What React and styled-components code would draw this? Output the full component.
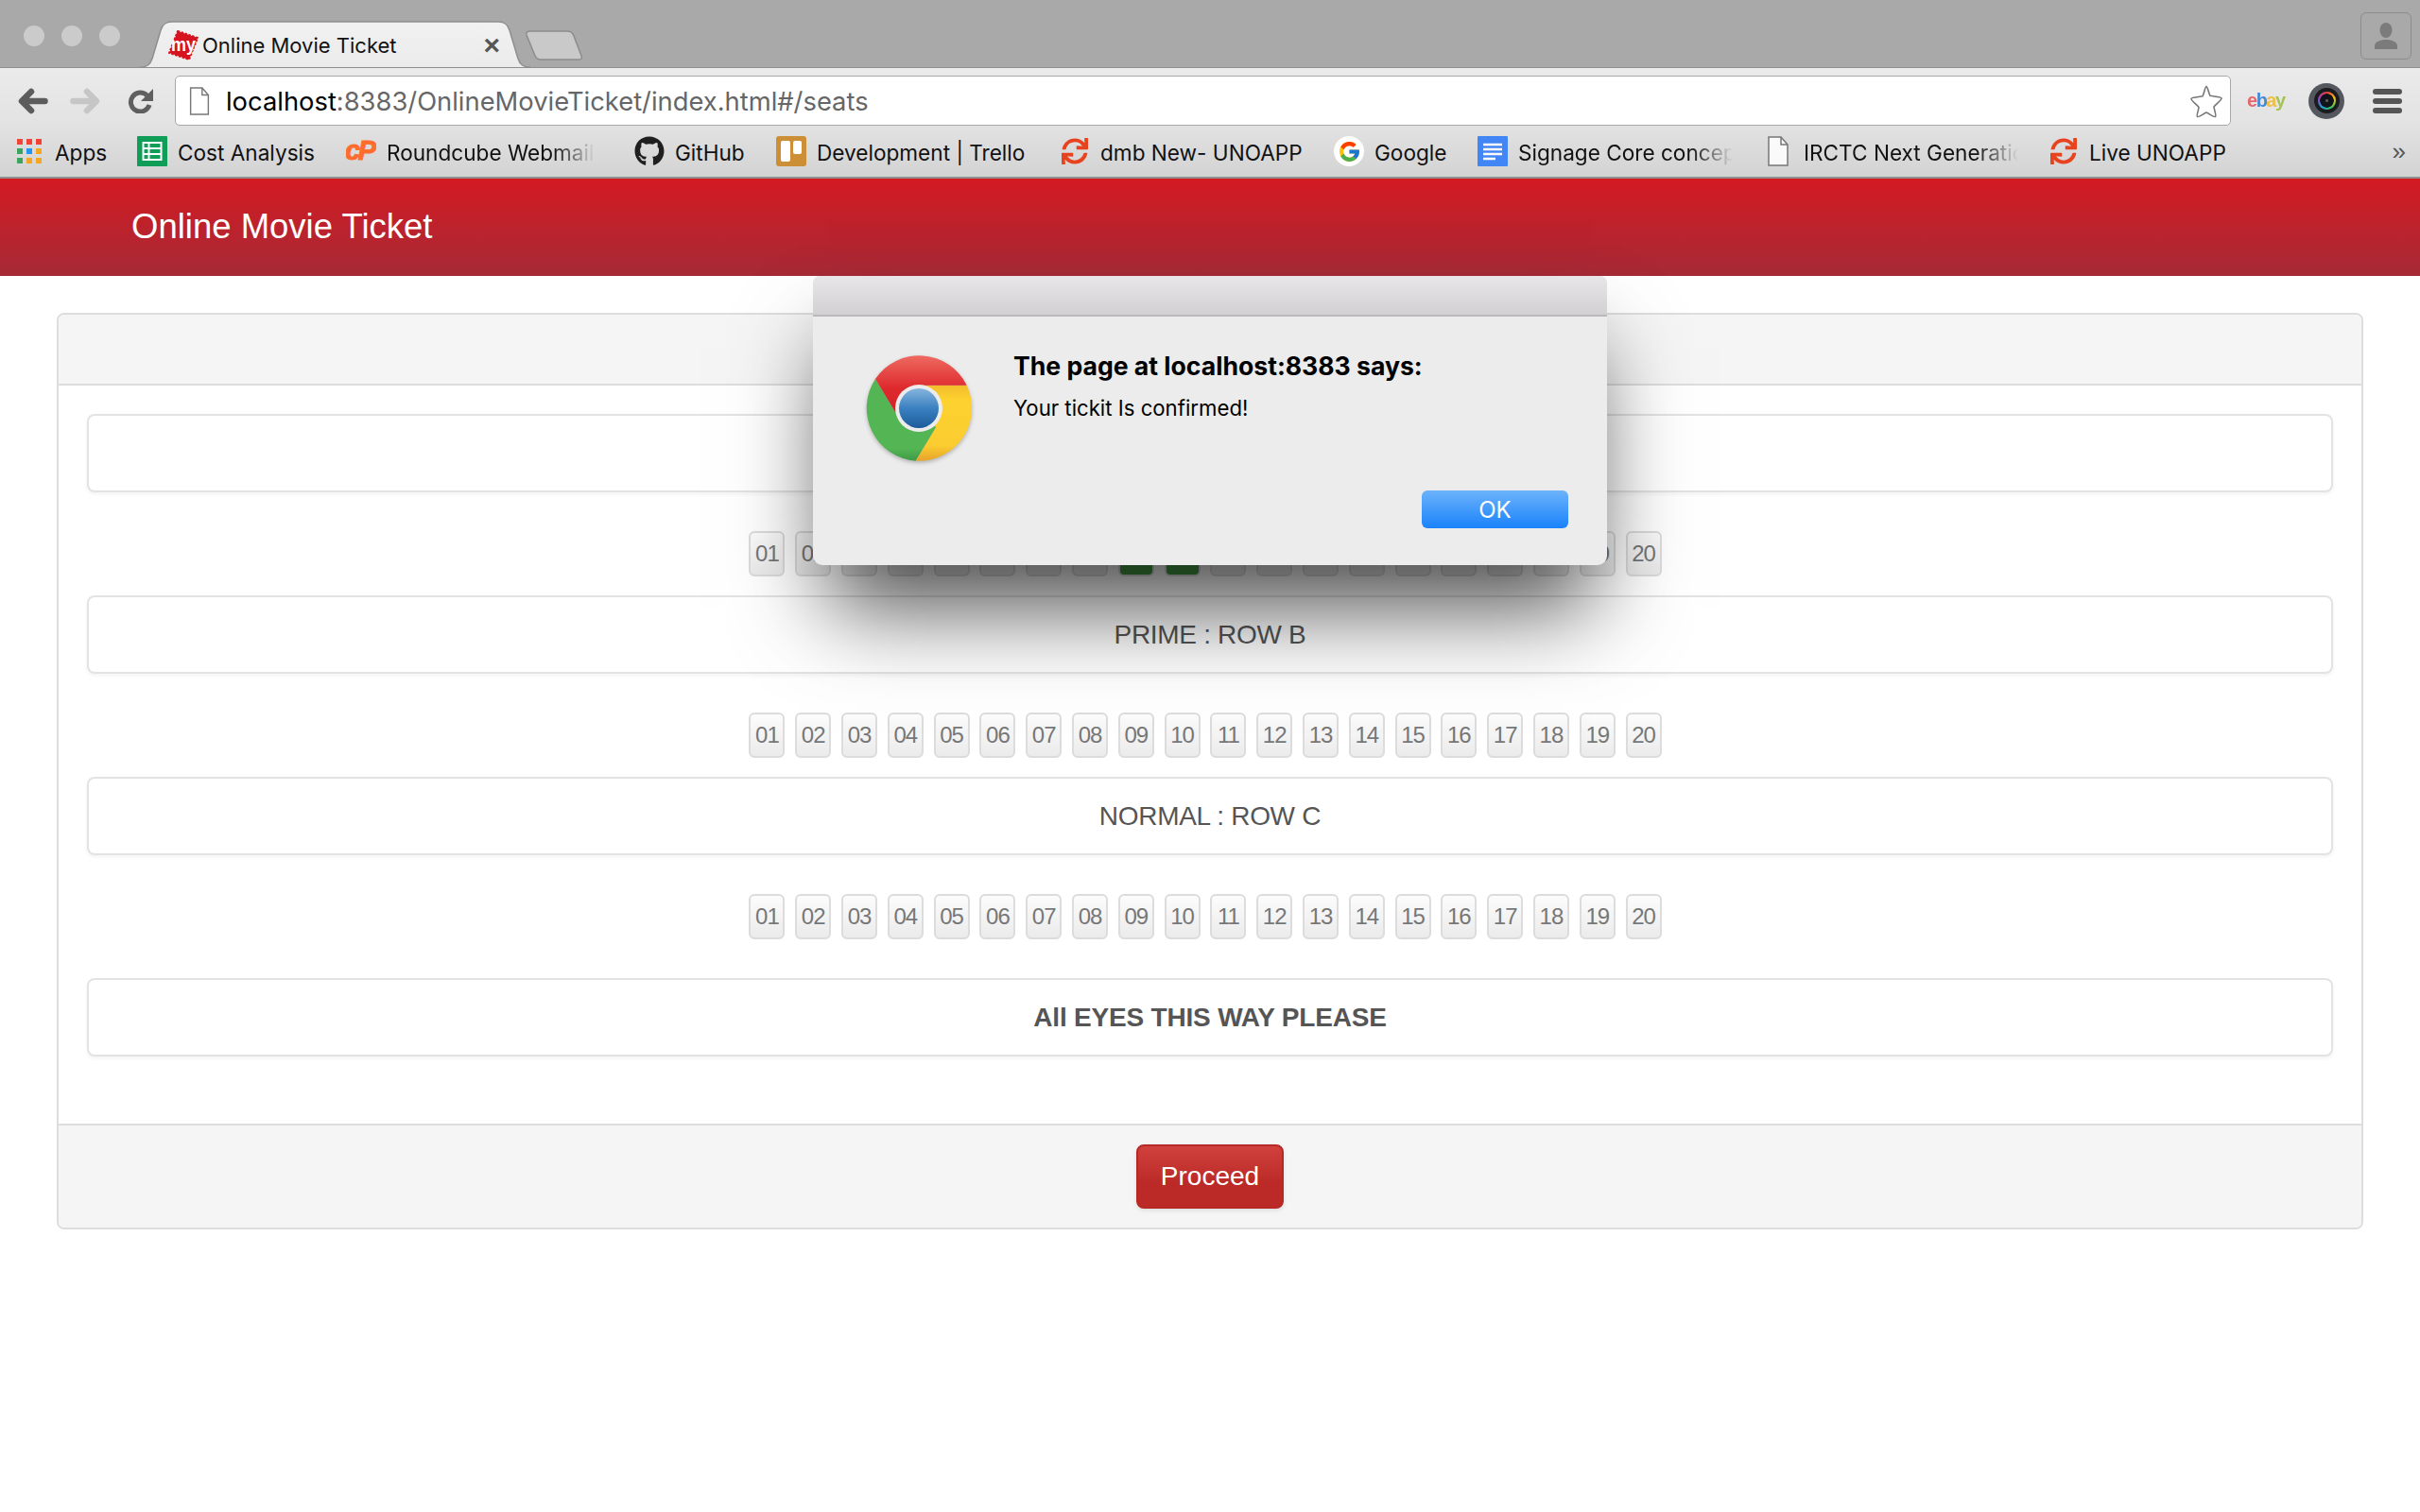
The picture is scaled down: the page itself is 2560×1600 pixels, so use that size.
import React from "react";
import styled, { createGlobalStyle } from "styled-components";
import { FaGithub, FaSync } from "react-icons/fa";
import { FcGoogle } from "react-icons/fc";

const GlobalStyle = createGlobalStyle`
  * { box-sizing: border-box; }
  html, body { margin: 0; background: #fff; }
  body { font-family: "Liberation Sans", Arial, sans-serif; }
`;

const GoogleIcon = styled.span`
  width: 32px;
  height: 32px;
  border-radius: 50%;
  background: #fff;
  display: flex;
  align-items: center;
  justify-content: center;
`;

const SEATS = Array.from({ length: 20 }, (_, i) => String(i + 1).padStart(2, "0"));

const BOOKMARKS = [
  { id: "apps", label: "Apps", width: 55, icon: <AppsIcon /> },
  { id: "cost", label: "Cost Analysis", width: 146, icon: <SheetsIcon /> },
  { id: "cube", label: "Roundcube Webmail", width: 221, trail: 9, fade: true, icon: <CpanelIcon /> },
  { id: "git", label: "GitHub", width: 75, icon: <FaGithub size={32} color="#1f1f1f" /> },
  { id: "trello", label: "Development | Trello", width: 225, icon: <TrelloIcon /> },
  { id: "dmb", label: "dmb New- UNOAPP", width: 215, icon: <FaSync size={28} color="#e8431f" /> },
  { id: "google", label: "Google", width: 77, icon: <GoogleIcon><FcGoogle size={25} /></GoogleIcon> },
  { id: "docs", label: "Signage Core concept", width: 227, fade: true, icon: <DocsIcon /> },
  { id: "irctc", label: "IRCTC Next Generation", width: 227, fade: true, icon: <PageIcon width={22} height={32} /> },
  { id: "live", label: "Live UNOAPP", width: 144, icon: <FaSync size={28} color="#e8431f" /> },
];

function AppsIcon() {
  const colors = ["#f44336", "#f44336", "#f44336", "#3ba55d", "#2196f3", "#f5a623", "#3ba55d", "#f5a623", "#f5a623"];
  return (
    <svg width="26" height="26" viewBox="0 0 26 26">
      {colors.map((c, i) => (
        <rect key={i} x={(i % 3) * 10} y={Math.floor(i / 3) * 10} width="6" height="6" fill={c} />
      ))}
    </svg>
  );
}

function SheetsIcon() {
  return (
    <svg width="32" height="32" viewBox="0 0 32 32">
      <rect width="32" height="32" rx="1" fill="#0f9d58" />
      <path d="M6.5 7h19v18h-19z M6.5 13h19 M6.5 19h19 M12.5 7v18" fill="none" stroke="#fff" strokeWidth="2" />
    </svg>
  );
}

function CpanelIcon() {
  return (
    <svg width="32" height="32" viewBox="0 0 32 32">
      <text x="-1" y="25" fontFamily="Liberation Sans" fontSize="29" fontWeight="700" fontStyle="italic" fill="#ff6c2c" stroke="#ff6c2c" strokeWidth="1" textLength="33">cP</text>
    </svg>
  );
}

function TrelloIcon() {
  return (
    <svg width="32" height="32" viewBox="0 0 32 32">
      <rect width="32" height="32" rx="3" fill="#cd8f36" />
      <rect x="5" y="5" width="10" height="22" rx="2" fill="#fff" />
      <rect x="18" y="5" width="9" height="14" rx="2" fill="#fff" />
    </svg>
  );
}

function DocsIcon() {
  return (
    <svg width="32" height="32" viewBox="0 0 32 32">
      <rect width="32" height="32" rx="1" fill="#4285f4" />
      <path d="M6 9h20 M6 14h20 M6 19h20 M6 24h13" stroke="#fff" strokeWidth="2.4" />
    </svg>
  );
}

function PageIcon({ width, height }) {
  return (
    <svg width={width} height={height} viewBox="0 0 22 32">
      <path d="M1 1h13l7 8v22H1z" fill="#fff" fillOpacity=".85" stroke="#777" strokeWidth="1.5" />
      <path d="M14 1v8h7" fill="none" stroke="#777" strokeWidth="1.5" />
    </svg>
  );
}

function ArrowIcon({ color, flip }) {
  return (
    <svg width="32" height="28" viewBox="0 0 32 28" style={flip ? { transform: "scaleX(-1)" } : undefined}>
      <path d="M14 4 4 14l10 10M5 14h23.500" fill="none" stroke={color} strokeWidth="6.500" strokeLinecap="round" strokeLinejoin="round" />
    </svg>
  );
}

function StarIcon() {
  return (
    <svg width="36" height="36" viewBox="0 0 36 36">
      <path d="M18 2.5c1.400 0 2 6.400 4 9.800 3 .8 11.500.9 12 2.700.5 1.800-6.200 6.500-8 9 .2 3 2.900 9.600 1.500 10.500-1.400.9-6.700-3.500-9.500-4.400-2.800.9-8.100 5.300-9.500 4.400C7.100 34 9.800 27.400 10 24.500c-1.800-2.500-8.500-7.200-8-9 .5-1.800 9-1.900 12-2.700 2-3.400 2.600-10.300 4-10.300z" fill="#fff" stroke="#777" strokeWidth="1.600" />
    </svg>
  );
}

function PersonIcon() {
  return (
    <svg width="26" height="28" viewBox="0 0 26 28">
      <ellipse cx="13" cy="8" rx="6.500" ry="8" fill="#7b7b7b" />
      <path d="M1 28v-3c0-5 6-7 12-7s12 2 12 7v3z" fill="#7b7b7b" />
    </svg>
  );
}

function ChromeLogo() {
  return (
    <ChromeSvg width="112" height="112" viewBox="0 0 112 112">
      <defs>
        <linearGradient id="chromeRed" x1="0" y1="0" x2="0" y2="1">
          <stop offset="0" stopColor="#ee6a60" />
          <stop offset=".55" stopColor="#de2a2e" />
          <stop offset="1" stopColor="#cf2229" />
        </linearGradient>
        <linearGradient id="chromeYellow" x1="0" y1="0" x2="0" y2="1">
          <stop offset="0" stopColor="#f2bd2c" />
          <stop offset=".2" stopColor="#fdd22f" />
          <stop offset=".8" stopColor="#fbcc30" />
          <stop offset="1" stopColor="#e5a32c" />
        </linearGradient>
        <linearGradient id="chromeGreen" x1="0" y1="0" x2="0" y2="1">
          <stop offset="0" stopColor="#53b553" />
          <stop offset=".85" stopColor="#53b553" />
          <stop offset="1" stopColor="#3f9a48" />
        </linearGradient>
        <linearGradient id="chromeBlue" x1="0" y1="0" x2="0" y2="1">
          <stop offset="0" stopColor="#86b5de" />
          <stop offset=".5" stopColor="#3b80c0" />
          <stop offset="1" stopColor="#1c5c9c" />
        </linearGradient>
      </defs>
      <path d="M10 25 32.700 62.700 74.300 76 52.700 111.700A56 56 0 0 1 10 25z" fill="url(#chromeGreen)" />
      <path d="M106.700 31.700A56 56 0 0 1 52.700 111.700L74.300 76 56 31.700z" fill="url(#chromeYellow)" />
      <path d="M10 25A56 56 0 0 1 106.700 31.700H56L32.700 62.700z" fill="url(#chromeRed)" />
      <circle cx="56" cy="56" r="25" fill="#ececec" />
      <circle cx="56" cy="56" r="21" fill="url(#chromeBlue)" />
    </ChromeSvg>
  );
}

function SeatRow({ selected = [] }) {
  return (
    <Seats>
      {SEATS.map((s) => (
        <Seat key={s} $selected={selected.includes(s)}>{s}</Seat>
      ))}
    </Seats>
  );
}

export default function App() {
  return (
    <>
      <GlobalStyle />
      <TabStrip>
        <Lights>
          <Light />
          <Light />
          <Light />
        </Lights>
        <Tab>
          <TabShape viewBox="0 0 413 49" preserveAspectRatio="none">
            <defs>
              <linearGradient id="tabFill" x1="0" y1="0" x2="0" y2="1">
                <stop offset="0" stopColor="#f1f1f1" />
                <stop offset="1" stopColor="#ebebeb" />
              </linearGradient>
            </defs>
            <path d="M0 48c8 0 11-3 13-9l9-30c2-6 5-9 12-9h345c7 0 10 3 12 9l9 30c2 6 5 9 13 9" fill="url(#tabFill)" stroke="#8e8e8e" strokeWidth="1.500" />
          </TabShape>
          <Favicon width="32" height="32" viewBox="0 0 32 32">
            <path d="M10 1l21 7-9 23L1 24z" fill="#d7131f" stroke="#d7131f" strokeWidth="2" strokeDasharray="2.500 1.500" />
            <path d="M10 2l20 6.500-8.500 21.500L2 23.500z" fill="#d7131f" />
            <text x="3" y="22" fontFamily="Liberation Sans" fontSize="21" fontWeight="700" fill="#fff" textLength="26" lengthAdjust="spacingAndGlyphs">my</text>
          </Favicon>
          <TabTitle>Online Movie Ticket</TabTitle>
          <TabClose>×</TabClose>
        </Tab>
        <NewTab width="62" height="32" viewBox="0 0 62 32">
          <path d="M6 1h39c4 0 6 2 7 5l8 21c1 3 0 4-3 4H17c-4 0-5-2-6-4L2 5C1 2 3 1 6 1z" fill="#c9c9c9" stroke="#8c8c8c" strokeWidth="1.500" />
        </NewTab>
        <ProfileButton>
          <PersonIcon />
        </ProfileButton>
      </TabStrip>

      <Toolbar>
        <NavButtons>
          <ArrowIcon color="#5c5c5c" />
          <ArrowIcon color="#c6c6c6" flip />
          <ReloadSvg width="28" height="26" viewBox="0 0 28 26">
            <path d="M21.500 7A10 10 0 1 0 24 17" fill="none" stroke="#5f5f5f" strokeWidth="5" />
            <path d="M28 0v13H15z" fill="#5f5f5f" />
          </ReloadSvg>
        </NavButtons>
        <Omnibox>
          <PageIcon width={22} height={30} />
          <Url>
            <UrlHost>localhost</UrlHost>:8383/OnlineMovieTicket/index.html#/seats
          </Url>
          <StarIcon />
        </Omnibox>
        <Ebay>
          <EbayLetter $color="#e53238">e</EbayLetter>
          <EbayLetter $color="#0064d2">b</EbayLetter>
          <EbayLetter $color="#f5af02">a</EbayLetter>
          <EbayLetter $color="#86b817">y</EbayLetter>
        </Ebay>
        <Lens>
          <LensRing />
        </Lens>
        <Menu>
          <MenuBar />
          <MenuBar />
          <MenuBar />
        </Menu>
      </Toolbar>

      <Bookmarks>
        {BOOKMARKS.map((b) => (
          <Bookmark key={b.id}>
            <BookmarkIcon>{b.icon}</BookmarkIcon>
            <BookmarkLabel $width={b.width} $trail={b.trail} $fade={b.fade}>{b.label}</BookmarkLabel>
          </Bookmark>
        ))}
        <More>»</More>
      </Bookmarks>

      <Navbar>Online Movie Ticket</Navbar>

      <Page>
        <Panel>
          <PanelHeading />
          <PanelBody>
            <RowGroup>
              <RowBox />
              <SeatRow selected={["09", "10"]} />
            </RowGroup>
            <RowGroup>
              <RowBox>PRIME : ROW B</RowBox>
              <SeatRow />
            </RowGroup>
            <RowGroup>
              <RowBox>NORMAL : ROW C</RowBox>
              <SeatRow />
            </RowGroup>
            <ScreenBox>All EYES THIS WAY PLEASE</ScreenBox>
          </PanelBody>
          <PanelFooter>
            <ProceedButton>Proceed</ProceedButton>
          </PanelFooter>
        </Panel>
      </Page>

      <Alert>
        <AlertBar />
        <AlertBody>
          <ChromeLogo />
          <AlertText>
            <AlertTitle>The page at localhost:8383 says:</AlertTitle>
            <AlertMessage>Your tickit Is confirmed!</AlertMessage>
          </AlertText>
          <OkButton>OK</OkButton>
        </AlertBody>
      </Alert>
    </>
  );
}

const TabStrip = styled.div`
  height: 72px;
  background: #a9a9a9;
  border-bottom: 1px solid #8f8f8f;
  display: flex;
  align-items: flex-end;
  padding-left: 25px;
  position: relative;
`;
const Lights = styled.div`
  display: flex;
  gap: 18px;
  align-self: flex-start;
  margin-top: 27px;
  margin-right: 21px;
`;
const Light = styled.span`
  width: 22px;
  height: 22px;
  border-radius: 50%;
  background: #cbcbcb;
`;
const Tab = styled.div`
  position: relative;
  width: 413px;
  height: 49px;
  margin-right: -6px;
  margin-bottom: -1px;
  display: flex;
  align-items: center;
  padding: 0 30px;
`;
const TabShape = styled.svg`
  position: absolute;
  inset: 0;
  width: 100%;
  height: 100%;
  overflow: visible;
`;
const Favicon = styled.svg`
  position: relative;
  flex: none;
  margin-right: 4px;
`;
const TabTitle = styled.span`
  position: relative;
  flex: 1;
  font-family: Inter, sans-serif;
  font-size: 22px;
  color: #111;
  white-space: nowrap;
`;
const TabClose = styled.span`
  position: relative;
  font-family: "Liberation Sans", sans-serif;
  font-weight: 700;
  font-size: 30px;
  line-height: 1;
  color: #555;
  margin-right: 2px;
`;
const NewTab = styled.svg`
  position: relative;
  align-self: flex-start;
  margin-top: 32px;
`;
const ProfileButton = styled.div`
  position: absolute;
  top: 13px;
  right: 9px;
  width: 54px;
  height: 50px;
  border: 1.5px solid #8c8c8c;
  border-radius: 6px;
  display: flex;
  align-items: center;
  justify-content: center;
`;
const Toolbar = styled.div`
  height: 61px;
  background: linear-gradient(#ebebeb, #e2e2e2);
  display: flex;
  align-items: center;
  padding: 8px 19px 0;
`;
const NavButtons = styled.div`
  display: flex;
  align-items: center;
  gap: 23px;
  width: 166px;
  flex: none;
`;
const ReloadSvg = styled.svg`
  margin-left: 5px;
`;
const Omnibox = styled.div`
  width: 2175px;
  height: 53px;
  flex: none;
  background: #fff;
  border: 1.5px solid #a8a8a8;
  border-radius: 5px;
  display: flex;
  align-items: center;
  padding: 0 7px 0 14px;
`;
const Url = styled.div`
  flex: 1;
  margin-left: 17px;
  padding-top: 2px;
  font-family: Inter, sans-serif;
  font-size: 27.350px;
  color: #666;
  white-space: nowrap;
`;
const UrlHost = styled.span`
  color: #000;
`;
const Ebay = styled.div`
  flex: none;
  width: 40px;
  margin-left: 17px;
  font-family: "Liberation Sans", sans-serif;
  font-weight: 700;
  font-size: 20px;
  letter-spacing: -1.500px;
  filter: blur(0.7px);
  opacity: 0.7;
`;
const EbayLetter = styled.span`
  color: ${(p) => p.$color};
`;
const Lens = styled.div`
  flex: none;
  width: 38px;
  height: 38px;
  margin-left: 25px;
  border-radius: 50%;
  background: #54585e;
  display: flex;
  align-items: center;
  justify-content: center;
`;
const LensRing = styled.div`
  width: 19px;
  height: 19px;
  border-radius: 50%;
  background: radial-gradient(circle, #555 0 10%, #10141a 14% 52%, transparent 56%), conic-gradient(#ef3b36, #f5c21b, #3cc24a, #17a2d8, #a03fc0, #ef3b36);
  box-shadow: 0 0 0 4px #1b1c20;
`;
const Menu = styled.div`
  flex: none;
  width: 31px;
  margin-left: 30px;
  display: flex;
  flex-direction: column;
  gap: 4px;
`;
const MenuBar = styled.span`
  height: 6px;
  border-radius: 3px;
  background: #555;
`;
const Bookmarks = styled.div`
  height: 56px;
  background: linear-gradient(#e2e2e2, #d3d3d3);
  border-bottom: 2px solid #8f8f8f;
  display: flex;
  align-items: center;
  gap: 32px;
  padding: 0 15px 0 15px;
`;
const Bookmark = styled.div`
  display: flex;
  align-items: center;
  gap: 11px;
  flex: none;
`;
const BookmarkIcon = styled.span`
  width: 32px;
  height: 32px;
  flex: none;
  display: flex;
  align-items: center;
  justify-content: center;
`;
const BookmarkLabel = styled.span`
  width: ${(p) => p.$width}px;
  margin-right: ${(p) => p.$trail || 0}px;
  padding-top: 2px;
  overflow: hidden;
  white-space: nowrap;
  font-family: Inter, sans-serif;
  font-size: 22.600px;
  color: #111;
  ${(p) => p.$fade && "mask-image: linear-gradient(90deg, #000 calc(100% - 45px), transparent);"}
`;
const More = styled.span`
  margin-left: auto;
  font-family: "Liberation Sans", sans-serif;
  font-size: 26px;
  color: #555;
`;
const Navbar = styled.div`
  height: 103px;
  background: linear-gradient(#d41a22, #a52a36);
  display: flex;
  align-items: center;
  padding: 0 0 2px 139px;
  font-size: 36.500px;
  color: #fff;
`;
const Page = styled.div`
  padding: 39px 60px 0;
  min-height: 1308px;
`;
const Panel = styled.div`
  border: 2px solid #ddd;
  border-radius: 8px;
  background: #fff;
`;
const PanelHeading = styled.div`
  height: 75px;
  background: #f5f5f5;
  border-bottom: 2px solid #ddd;
  border-radius: 6px 6px 0 0;
`;
const PanelBody = styled.div`
  padding: 30px 30px 71px;
  display: flex;
  flex-direction: column;
  gap: 20px;
`;
const RowGroup = styled.div`
  display: flex;
  flex-direction: column;
  gap: 41px;
`;
const RowBox = styled.div`
  height: 83px;
  background: #fff;
  border: 2px solid #e3e3e3;
  border-radius: 8px;
  box-shadow: 0 2px 4px rgba(0, 0, 0, 0.05);
  display: flex;
  align-items: center;
  justify-content: center;
  font-size: 28px;
  letter-spacing: -0.3px;
  color: #555;
`;
const ScreenBox = styled(RowBox)`
  margin-top: 21px;
  font-weight: 700;
  letter-spacing: -0.2px;
`;
const Seats = styled.div`
  display: flex;
  justify-content: center;
  gap: 10.800px;
  padding-right: 10px;
`;
const Seat = styled.button`
  width: 38px;
  height: 48px;
  padding: 0;
  border: 2px solid #dcdcdc;
  border-radius: 6px;
  background: ${(p) => (p.$selected ? "linear-gradient(#5cb85c, #419641)" : "linear-gradient(#fcfcfc, #ebebeb)")};
  font-family: "Liberation Sans", sans-serif;
  font-size: 24px;
  letter-spacing: -1px;
  color: #777;
`;
const PanelFooter = styled.div`
  height: 110px;
  padding-bottom: 1px;
  background: #f5f5f5;
  border-top: 2px solid #ddd;
  border-radius: 0 0 6px 6px;
  display: flex;
  align-items: center;
  justify-content: center;
`;
const ProceedButton = styled.button`
  width: 156px;
  height: 68px;
  padding: 0;
  border: 2px solid #b52a26;
  border-radius: 8px;
  background: linear-gradient(#d0413e, #bb2a26 60%);
  box-shadow: 0 2px 4px rgba(0, 0, 0, 0.1);
  font-family: "Liberation Sans", sans-serif;
  font-size: 28px;
  color: #fff;
`;
const Alert = styled.div`
  position: absolute;
  top: 292px;
  left: 860px;
  width: 840px;
  height: 306px;
  border-radius: 8px 8px 10px 10px;
  background: #ececec;
  box-shadow: 0 60px 90px -16px rgba(0, 0, 0, 0.7);
  display: flex;
  flex-direction: column;
`;
const AlertBar = styled.div`
  height: 43px;
  flex: none;
  background: linear-gradient(#e8e6e8, #d2d0d3);
  border-bottom: 2px solid #b9b9b9;
  border-radius: 8px 8px 0 0;
`;
const AlertBody = styled.div`
  flex: 1;
  position: relative;
  display: flex;
  align-items: flex-start;
  padding: 37px 0 0 56px;
`;
const ChromeSvg = styled.svg`
  flex: none;
  margin-top: 4px;
  filter: drop-shadow(0 2px 2px rgba(0, 0, 0, 0.25));
`;
const AlertText = styled.div`
  margin-left: 44px;
  font-family: Inter, sans-serif;
  color: #000;
`;
const AlertTitle = styled.div`
  font-size: 26.600px;
  font-weight: 700;
  line-height: 30px;
`;
const AlertMessage = styled.div`
  font-size: 22.200px;
  line-height: 26px;
  margin-top: 17px;
`;
const OkButton = styled.button`
  position: absolute;
  right: 41px;
  bottom: 39px;
  width: 155px;
  height: 40px;
  padding: 0;
  border: none;
  border-radius: 6px;
  background: linear-gradient(#6cb3fb, #1a82fb);
  font-family: Inter, sans-serif;
  font-size: 24px;
  color: #fff;
`;
